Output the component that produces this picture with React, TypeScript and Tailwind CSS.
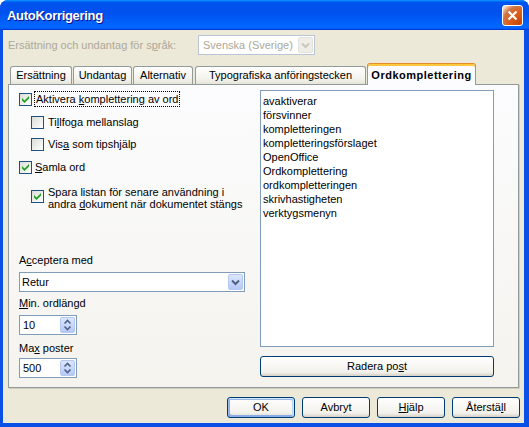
import React from "react";

const U = ({ children }: { children: React.ReactNode }) => (
  <span className="underline decoration-1 underline-offset-[1px]">{children}</span>
);

function Check({ checked }: { checked: boolean }) {
  return (
    <span className="w-[13px] h-[13px] shrink-0 border border-[#1C5180] bg-[linear-gradient(135deg,#DCDCD7,#FFFFFF)] flex items-center justify-center">
      {checked && (
        <svg width="7" height="7" viewBox="0 0 7 7">
          <path d="M0 2 L2.5 4.5 L7 0 L7 2.5 L2.5 7 L0 4.5 Z" fill="#21A121" />
        </svg>
      )}
    </span>
  );
}

function ArrowBtn({ disabled }: { disabled?: boolean }) {
  return (
    <span
      className={
        disabled
          ? "w-[15px] h-[16px] rounded-[2px] border border-[#E3E2DA] bg-[#EEEDE7] flex items-center justify-center"
          : "w-[15px] h-[16px] rounded-[2px] border border-[#B5C8F2] bg-[linear-gradient(180deg,#DCE6FD,#B5C9F7)] flex items-center justify-center"
      }
    >
      <svg width="13" height="14" viewBox="0 0 13 14">
        <path
          d="M3 5.5 L6.5 9 L10 5.5"
          stroke={disabled ? "#C9C7BA" : "#4D6185"}
          strokeWidth="2"
          fill="none"
        />
      </svg>
    </span>
  );
}

function SpinBtn() {
  return (
    <span className="w-[15px] h-[16px] rounded-[2px] border border-[#B5C8F2] bg-[linear-gradient(180deg,#DCE6FD,#B5C9F7)] flex items-center justify-center">
      <svg width="13" height="14" viewBox="0 0 13 14">
        <path d="M3.5 5.5 L6.5 2.5 L9.5 5.5" stroke="#4D6185" strokeWidth="1.6" fill="none" />
        <path d="M3.5 8.5 L6.5 11.5 L9.5 8.5" stroke="#4D6185" strokeWidth="1.6" fill="none" />
      </svg>
    </span>
  );
}

function Spin({ value, className }: { value: string; className: string }) {
  return (
    <div
      className={
        "w-[58px] h-[20px] border border-[#7F9DB9] bg-white flex items-center justify-between pl-[3px] pr-[1px] " +
        className
      }
    >
      <span className="text-[11px] leading-none">{value}</span>
      <SpinBtn />
    </div>
  );
}

function Tab({ w, children }: { w: string; children: React.ReactNode }) {
  return (
    <div
      className={
        "h-[18px] border-t border-l border-r border-[#919B9C] rounded-t-[3px] bg-[linear-gradient(180deg,#FFFFFF,#F3F2EC_70%,#E6E4DA)] flex items-center justify-center text-[11px] leading-none text-black " +
        w
      }
    >
      {children}
    </div>
  );
}

function XPButton({
  children,
  w,
  def,
}: {
  children: React.ReactNode;
  w: string;
  def?: boolean;
}) {
  return (
    <div
      className={
        "h-[21px] rounded-[3px] border border-[#003C74] bg-[linear-gradient(180deg,#FFFFFF,#F2F1EC_80%,#D6D0C5)] flex items-center justify-center text-[11px] leading-none text-black " +
        (def
          ? "shadow-[inset_-1px_1px_#CEE7FF,inset_1px_2px_#98B8EA,inset_-2px_2px_#BCD4F6,inset_1px_-1px_#89ADE4,inset_2px_-2px_#89ADE4] "
          : "") +
        w
      }
    >
      <span>{children}</span>
    </div>
  );
}

const words = [
  "avaktiverar",
  "försvinner",
  "kompletteringen",
  "kompletteringsförslaget",
  "OpenOffice",
  "Ordkomplettering",
  "ordkompletteringen",
  "skrivhastigheten",
  "verktygsmenyn",
];

export default function App() {
  return (
    <div className="w-[529px] h-[427px] bg-[#0A50E6] rounded-t-[8px] overflow-hidden flex flex-col font-['Liberation_Sans',Arial,sans-serif] text-black select-none">
      {/* Title bar */}
      <div className="h-[30px] shrink-0 flex items-center justify-between pl-[7px] pr-[6px] bg-[linear-gradient(180deg,#0997FF,#0053EE_8%,#0050EE_40%,#0066FF_88%,#0066FF_93%,#005BFF_95%,#003DD7_96%,#003DD7)]">
        <span className="text-white font-bold text-[13px] tracking-[-0.3px] leading-none [text-shadow:1px_1px_#0F1089]">
          AutoKorrigering
        </span>
        <span className="w-[21px] h-[21px] rounded-[3px] border border-white bg-[radial-gradient(circle_at_90%_90%,#CC4600_0%,#DC6527_55%,#CD7546_70%,#FFCCB2_90%,#FFFFFF_100%)] flex items-center justify-center">
          <svg width="13" height="13" viewBox="0 0 13 13">
            <path d="M2.5 2.5 L10.5 10.5 M10.5 2.5 L2.5 10.5" stroke="white" strokeWidth="2.2" />
          </svg>
        </span>
      </div>

      {/* Body */}
      <div className="flex-1 ml-[3px] mr-[5px] mb-[4px] bg-[#ECE9D8] flex flex-col">
        {/* language row */}
        <div className="mt-[5px] h-[20px] pl-[5px] flex items-center">
          <span className="w-[190px] text-[11px] leading-none text-[#ACA899]">
            Ersättning och undantag för s<U>p</U>råk:
          </span>
          <div className="w-[117px] h-[20px] border border-[#B9C5D7] bg-white flex items-center justify-between pl-[4px] pr-[1px]">
            <span className="text-[11px] leading-none text-[#ACA899]">Svenska (Sverige)</span>
            <ArrowBtn disabled />
          </div>
        </div>

        {/* tabs */}
        <div className="mt-[8px] h-[21px] ml-[5px] pl-[2px] flex items-end">
          <Tab w="w-[62px]">Ersättning</Tab>
          <Tab w="w-[59px] ml-[1px]">Undantag</Tab>
          <Tab w="w-[60px] ml-[1px]">Alternativ</Tab>
          <Tab w="w-[171px] ml-[2px]">Typografiska anföringstecken</Tab>
          <div className="relative z-10 ml-[1px] -mb-[1px] w-[109px] h-[22px] border-t border-l border-r border-[#919B9C] border-t-[#E68B2C] rounded-t-[3px] shadow-[inset_0_2px_0_#FFC73C] bg-[#FCFCFE] flex items-center justify-center pt-[2px] text-[11px] font-bold tracking-[0.5px] leading-none">
            Ordkomplettering
          </div>
        </div>

        {/* panel */}
        <div className="ml-[5px] w-[511px] h-[304px] border border-[#919B9C] shadow-[1px_1px_0_#D0CEBF] bg-[linear-gradient(180deg,#FCFCFE,#F4F3EE)] flex pl-[10px]">
          {/* left column */}
          <div className="w-[226px] flex flex-col pt-[6px] text-[11px]">
            <div className="h-[16px] flex items-center gap-[2px]">
              <Check checked />
              <span className="block h-[16px] px-[1px] border border-dotted border-black leading-[14px]">
                Aktivera <U>k</U>omplettering av ord
              </span>
            </div>
            <div className="mt-[7px] h-[16px] ml-[12px] flex items-center gap-[4px]">
              <Check checked={false} />
              <span className="leading-none">
                Ti<U>l</U>lfoga mellanslag
              </span>
            </div>
            <div className="mt-[6px] h-[16px] ml-[12px] flex items-center gap-[4px]">
              <Check checked={false} />
              <span className="leading-none">
                Vis<U>a</U> som tipshjälp
              </span>
            </div>
            <div className="mt-[7px] h-[16px] flex items-center gap-[3px]">
              <Check checked />
              <span className="leading-none">
                <U>S</U>amla ord
              </span>
            </div>
            <div className="mt-[11px] ml-[12px] flex items-start gap-[4px]">
              <span className="mt-[4px]">
                <Check checked />
              </span>
              <span className="leading-[12px]">
                Spara listan för senare användning i
                <br />
                andra <U>d</U>okument när dokumentet stängs
              </span>
            </div>

            <div className="mt-[44px] leading-[13px]">
              A<U>c</U>ceptera med
            </div>
            <div className="mt-[5px] h-[20px] border border-[#7F9DB9] bg-white flex items-center justify-between pl-[2px] pr-[1px]">
              <span className="leading-none">Retur</span>
              <ArrowBtn />
            </div>
            <div className="mt-[5px] leading-[13px]">
              <U>M</U>in. ordlängd
            </div>
            <Spin value="10" className="mt-[5px]" />
            <div className="mt-[7px] leading-[13px]">
              Ma<U>x</U> poster
            </div>
            <Spin value="500" className="mt-[3px]" />
          </div>

          {/* right column */}
          <div className="ml-[15px] w-[234px] flex flex-col pt-[5px]">
            <div className="h-[257px] border border-[#7F9DB9] bg-white pt-[3px] pl-[2px] text-[11px] leading-[14px]">
              {words.map((w) => (
                <div key={w}>{w}</div>
              ))}
            </div>
            <div className="mt-[9px]">
              <XPButton w="w-[234px]">
                Radera po<U>s</U>t
              </XPButton>
            </div>
          </div>
        </div>

        {/* bottom buttons */}
        <div className="mt-[9px] flex justify-end gap-[7px] pr-[4px]">
          <XPButton w="w-[68px]" def>
            OK
          </XPButton>
          <XPButton w="w-[68px]">Avbryt</XPButton>
          <XPButton w="w-[68px]">
            <U>H</U>jälp
          </XPButton>
          <XPButton w="w-[68px]">
            Återstä<U>l</U>l
          </XPButton>
        </div>
      </div>
    </div>
  );
}
